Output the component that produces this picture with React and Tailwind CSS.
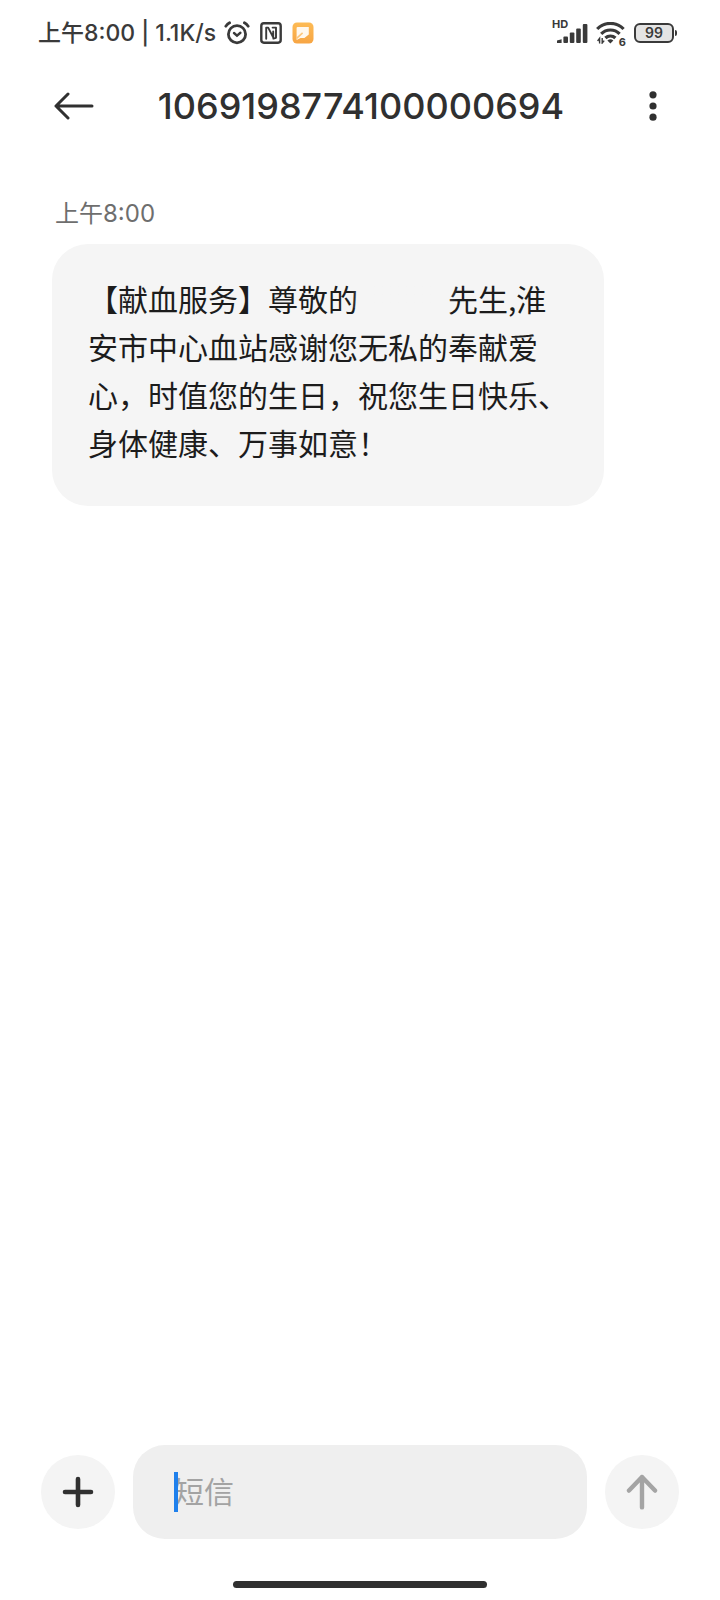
import { useState } from "react";

function AlarmIcon() {
  return (
    <svg width="26" height="24" viewBox="0 0 26 24" fill="none" stroke="#3a3a3a" strokeWidth="2.8" strokeLinecap="round">
      <circle cx="13" cy="13.2" r="8.6" />
      <path d="M10 12l3 2.6 3.4-2.8" strokeWidth="2.4" />
      <path d="M1.8 5.2c1-1.4 2.2-2.6 3.8-3.4M24.2 5.2c-1-1.4-2.2-2.6-3.8-3.4" strokeWidth="2.8" />
    </svg>
  );
}

function NfcIcon() {
  return (
    <svg width="22" height="22" viewBox="0 0 22 22" fill="none" stroke="#3a3a3a" strokeWidth="1.9" strokeLinejoin="round" strokeLinecap="round">
      <rect x="1.3" y="1.3" width="19.4" height="19.4" rx="2.6" strokeWidth="2.4" />
      <path d="M6.2 16.8V5.6h2l5 9.8V9.4" />
      <path d="M12.6 5.6h3.4v10.2l-2.6.8" />
    </svg>
  );
}

function NoteIcon() {
  return (
    <svg width="22" height="22" viewBox="0 0 22 22">
      <defs>
        <linearGradient id="note" x1="0" y1="0" x2="0" y2="1">
          <stop offset="0" stopColor="#fdbb55" />
          <stop offset="1" stopColor="#f7a544" />
        </linearGradient>
      </defs>
      <rect x="0.5" y="0.5" width="21" height="21" rx="4.5" fill="url(#note)" />
      <path d="M5.6 5h11.2v7.4L12.4 16H8.6l-4 2V6a1 1 0 0 1 1-1z" fill="#fff8ee" />
      <path d="M4.6 16.4l6-5.6" stroke="#fcc67c" strokeWidth="1.6" />
    </svg>
  );
}

function SignalIcon() {
  return (
    <svg width="32" height="22" viewBox="0 0 32 22" fill="#3a3a3a">
      <path d="M1 21v-2.6l4.6-1.2V21z" />
      <rect x="7.4" y="14.5" width="4.6" height="6.5" rx="1" />
      <rect x="13.8" y="10.5" width="4.6" height="10.5" rx="1" />
      <rect x="20.2" y="6.5" width="4.6" height="14.5" rx="1" />
      <rect x="26.8" y="2" width="4.6" height="19" rx="1" />
    </svg>
  );
}

function WifiIcon() {
  return (
    <svg width="30" height="22" viewBox="0 0 30 22" fill="none" stroke="#3a3a3a" strokeWidth="3.2">
      <path d="M1.2 7a18.4 18.4 0 0 1 26.4 0" />
      <path d="M5.2 11.8a13 13 0 0 1 18.4 0" />
      <path d="M9.4 16a7.2 7.2 0 0 1 10 0" />
      <path d="M14.4 21.6l-3-3a4.6 4.6 0 0 1 6 0z" fill="#3a3a3a" stroke="none" />
      <path d="M3.6 21.4v-5l-2 2.6M6.2 16v5l2-2.4" strokeWidth="1.4" />
    </svg>
  );
}

function StatusBar() {
  return (
    <div className="flex h-[65px] items-center justify-between pr-[43px] pl-[38px] text-[#3a3a3a]">
      <div className="flex items-center">
        <span className="text-[23px] leading-8 font-medium whitespace-pre">上午8:00 | 1.1K/s</span>
        <div className="ml-2 flex items-center gap-2.5">
          <AlarmIcon />
          <NfcIcon />
          <NoteIcon />
        </div>
      </div>
      <div className="flex items-center gap-2">
        <div className="relative">
          <SignalIcon />
          <span className="absolute -top-1 -left-1 text-[11px] leading-3 font-bold">HD</span>
        </div>
        <div className="relative">
          <WifiIcon />
          <span className="absolute right-0 -bottom-1 text-[11px] leading-3 font-bold">6</span>
        </div>
        <div className="flex items-center gap-px">
          <span className="flex h-5 w-10 items-center justify-center rounded-md border-2 border-[#3a3a3a] bg-[#e4e4e4] text-[14px] leading-4 font-semibold">
            99
          </span>
          <span className="h-1.5 w-0.5 rounded-r bg-[#3a3a3a]" />
        </div>
      </div>
    </div>
  );
}

function Header({ number }) {
  return (
    <header className="flex h-[82px] items-center justify-between pr-[38px] pl-[50px] text-[#303030]">
      <button type="button" aria-label="返回" className="flex size-12 items-center justify-center">
        <svg width="40" height="28" viewBox="0 0 40 28" fill="none" stroke="currentColor" strokeWidth="3" strokeLinecap="round" strokeLinejoin="round">
          <path d="M38 14H2M14 2L2 14l12 12" />
        </svg>
      </button>
      <h1 className="text-[36px] leading-[48px] font-medium">{number}</h1>
      <button type="button" aria-label="更多" className="flex h-12 w-[58px] items-center justify-center">
        <svg width="8" height="32" viewBox="0 0 8 32" fill="currentColor">
          <circle cx="4" cy="4.8" r="3.6" />
          <circle cx="4" cy="16" r="3.6" />
          <circle cx="4" cy="27.2" r="3.6" />
        </svg>
      </button>
    </header>
  );
}

// the recipient's name is hidden behind three full-width spaces
const MESSAGE =
  "【献血服务】尊敬的\u3000\u3000\u3000先生,淮安市中心血站感谢您无私的奉献爱心，时值您的生日，祝您生日快乐、身体健康、万事如意！";

function MessageBubble() {
  return (
    <div className="relative w-[552px] max-w-full rounded-[36px] bg-[#f5f5f5] px-9 pt-[30px] pb-10">
      <p className="font-['Noto_Sans_CJK_SC',sans-serif] text-[30px] leading-[48px] text-[#1c1c1c]">{MESSAGE}</p>
      <span className="absolute top-10 left-[298px] h-6 w-[108px] bg-linear-to-r from-transparent via-[#f5f5f5] to-transparent" />
    </div>
  );
}

function Composer() {
  const [text, setText] = useState("");

  return (
    <form onSubmit={(e) => e.preventDefault()} className="flex items-center gap-[18px] px-[41px]">
      <button type="button" aria-label="添加" className="flex size-[74px] shrink-0 items-center justify-center rounded-full bg-[#f4f4f4] text-[#303030]">
        <svg width="32" height="32" viewBox="0 0 32 32" fill="none" stroke="currentColor" strokeWidth="4.6" strokeLinecap="round">
          <path d="M16 3v26M3 16h26" />
        </svg>
      </button>
      <label className="flex h-[94px] min-w-0 flex-1 items-center rounded-[32px] bg-[#efefef] px-[41px]">
        <input
          type="text"
          aria-label="短信"
          placeholder="短信"
          value={text}
          onChange={(e) => setText(e.target.value)}
          className="order-2 -ml-1 h-12 min-w-0 flex-1 bg-transparent text-[30px] text-[#1c1c1c] caret-[#1f80ec] outline-none placeholder:text-[#a3a3a3]"
        />
        <span className="relative order-1 h-10 w-1 bg-[#1f80ec]" />
      </label>
      <button type="submit" aria-label="发送" className="flex size-[74px] shrink-0 items-center justify-center rounded-full bg-[#f4f4f4] text-[#a4a4a4]">
        <svg width="32" height="36" viewBox="0 0 32 36" fill="none" stroke="currentColor" strokeWidth="4.4" strokeLinecap="round" strokeLinejoin="round">
          <path d="M16 33.4V3M3 16.6L16 3l13 13.6" />
        </svg>
      </button>
    </form>
  );
}

export default function App() {
  return (
    <div className="flex min-h-screen flex-col bg-white font-['Inter','Noto_Sans_CJK_SC',sans-serif]">
      <StatusBar />
      <Header number="1069198774100000694" />
      <main className="flex-1 px-[52px] pt-[51px]">
        <time className="block pb-3.5 pl-[3px] text-[24px] leading-8 text-[#6e6e6e]">上午8:00</time>
        <MessageBubble />
      </main>
      <Composer />
      <div className="mx-auto mt-[42px] mb-3 h-[7px] w-[254px] rounded-full bg-[#303030]" />
    </div>
  );
}
